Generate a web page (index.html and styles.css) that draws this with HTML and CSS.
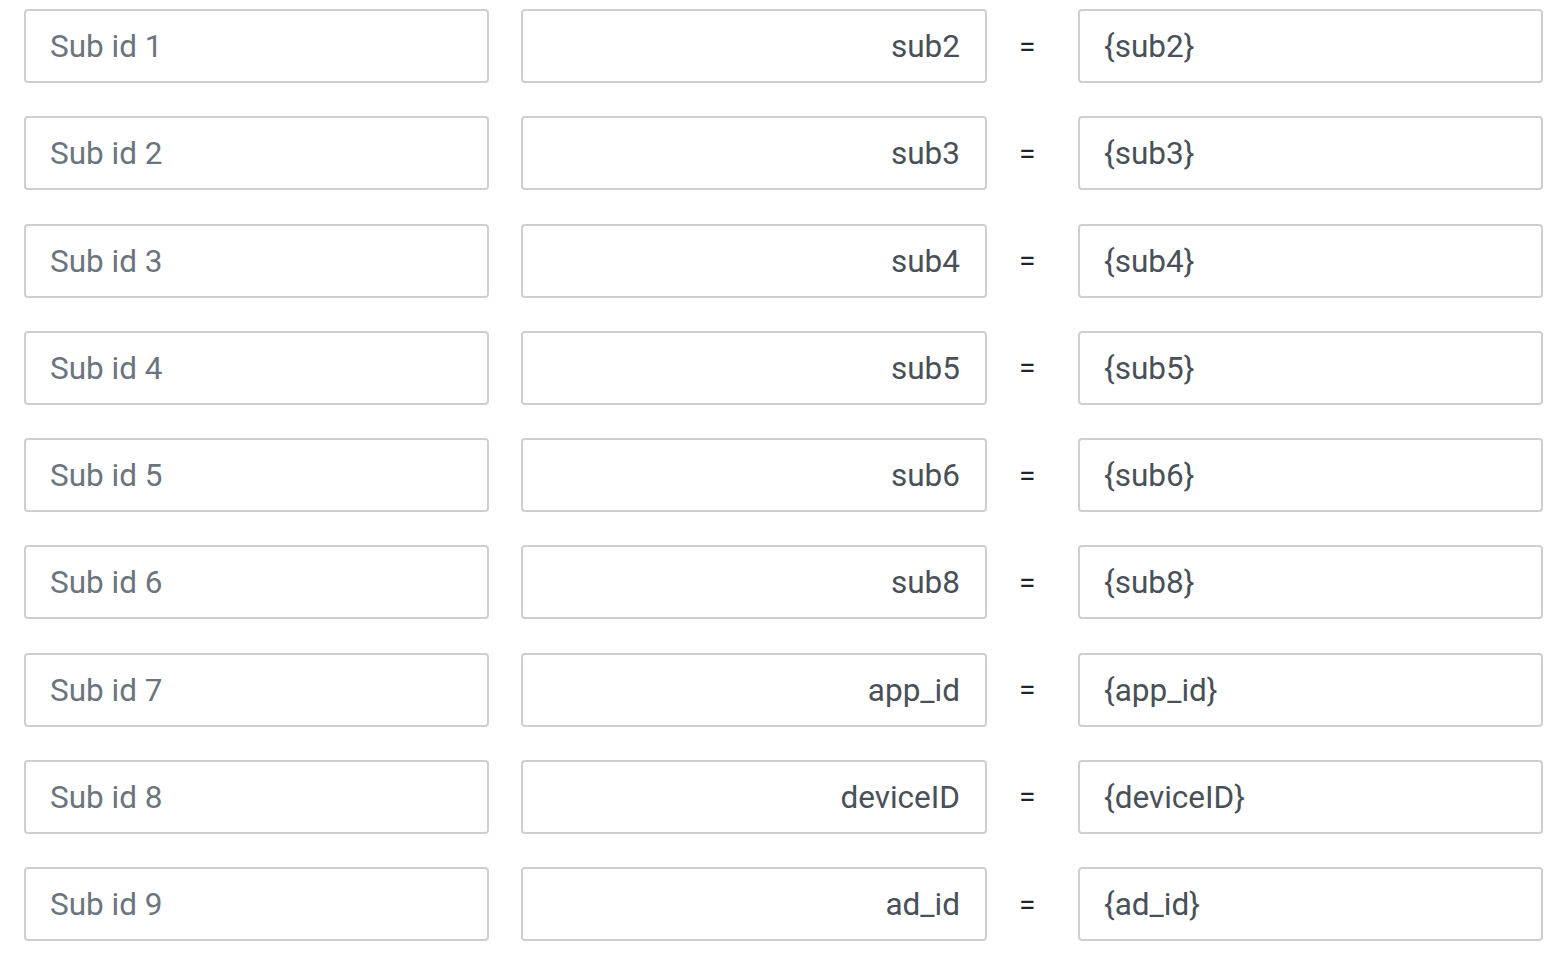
FILE: index.html
```html
<!DOCTYPE html>
<html>
<head>
<meta charset="utf-8">
<link rel="stylesheet" href="styles.css">
</head>
<body>
<div class="form">
  <div class="row"><input class="field key" placeholder="Sub id 1"><input class="field name" value="sub2"><span class="eq">=</span><input class="field val" value="{sub2}"></div>
  <div class="row"><input class="field key" placeholder="Sub id 2"><input class="field name" value="sub3"><span class="eq">=</span><input class="field val" value="{sub3}"></div>
  <div class="row"><input class="field key" placeholder="Sub id 3"><input class="field name" value="sub4"><span class="eq">=</span><input class="field val" value="{sub4}"></div>
  <div class="row"><input class="field key" placeholder="Sub id 4"><input class="field name" value="sub5"><span class="eq">=</span><input class="field val" value="{sub5}"></div>
  <div class="row"><input class="field key" placeholder="Sub id 5"><input class="field name" value="sub6"><span class="eq">=</span><input class="field val" value="{sub6}"></div>
  <div class="row"><input class="field key" placeholder="Sub id 6"><input class="field name" value="sub8"><span class="eq">=</span><input class="field val" value="{sub8}"></div>
  <div class="row"><input class="field key" placeholder="Sub id 7"><input class="field name" value="app_id"><span class="eq">=</span><input class="field val" value="{app_id}"></div>
  <div class="row"><input class="field key" placeholder="Sub id 8"><input class="field name" value="deviceID"><span class="eq">=</span><input class="field val" value="{deviceID}"></div>
  <div class="row"><input class="field key" placeholder="Sub id 9"><input class="field name" value="ad_id"><span class="eq">=</span><input class="field val" value="{ad_id}"></div>
</div>
</body>
</html>
```
FILE: styles.css
```css
html, body {
  margin: 0;
  padding: 0;
  background: #ffffff;
}
body {
  font-family: Roboto, "Liberation Sans", sans-serif;
}
.form {
  padding: 9px 25px 0 24px;
  display: flex;
  flex-direction: column;
  gap: 33.25px;
}
.row {
  display: flex;
  align-items: center;
}
.field {
  box-sizing: border-box;
  height: 74px;
  margin: 0;
  border: 2px solid #cfcfcf;
  border-radius: 4px;
  padding: 1px 24px 0 24px;
  font-family: Roboto, "Liberation Sans", sans-serif;
  font-size: 31.5px;
  color: #495057;
  background: #ffffff;
  outline: none;
  min-width: 0;
}
.field::placeholder {
  color: #6c757d;
  opacity: 1;
}
.key {
  width: 465px;
  flex: none;
}
.name {
  width: 466px;
  flex: none;
  margin-left: 32px;
  text-align: right;
  padding-right: 25px;
}
.eq {
  width: 91px;
  flex: none;
  box-sizing: border-box;
  padding-left: 32px;
  font-size: 30px;
  color: #212529;
}
.val {
  flex: 1;
}
```
